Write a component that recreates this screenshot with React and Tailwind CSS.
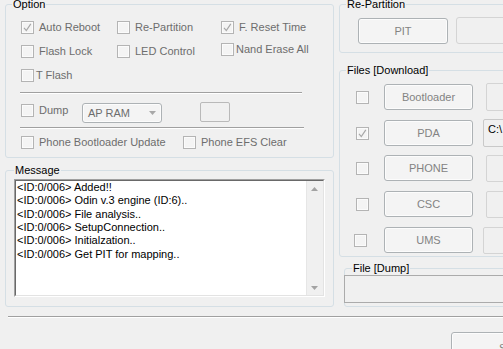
import React from "react";

function Check({ checked }) {
  return (
    <span className="w-[13px] h-[13px] shrink-0 border border-[#b4b4b4] bg-[#f4f4f4] shadow-[inset_0_0_0_1px_#fbfbfb] flex items-center justify-center">
      {checked && (
        <svg width="11" height="11" viewBox="0 0 11 11">
          <path d="M2 5.8 L4.3 8.6 L8.8 1.8" fill="none" stroke="#a8a8a8" strokeWidth="1.2" />
        </svg>
      )}
    </span>
  );
}

function CheckItem({ checked, label, gapClass, className }) {
  return (
    <div className={"flex items-center h-[13px] shrink-0 " + (className || "")}>
      <Check checked={checked} />
      <span className={"text-[#6d6d6d] whitespace-nowrap " + (gapClass || "ml-[5px]")}>{label}</span>
    </div>
  );
}

function Btn({ children, className }) {
  return (
    <div
      className={
        "flex items-center justify-center shrink-0 border border-[#adb2b5] rounded-[3px] bg-[#f4f4f4] text-[#838383] shadow-[inset_0_0_0_1px_#fcfcfc] " +
        (className || "")
      }
    >
      {children}
    </div>
  );
}

function Box({ className, children }) {
  return (
    <div className={"shrink-0 border border-[#c9c9c9] rounded-[2px] bg-[#f0f0f0] " + (className || "")}>{children}</div>
  );
}

const lines = [
  "<ID:0/006> Added!!",
  "<ID:0/006> Odin v.3 engine (ID:6)..",
  "<ID:0/006> File analysis..",
  "<ID:0/006> SetupConnection..",
  "<ID:0/006> Initialzation..",
  "<ID:0/006> Get PIT for mapping..",
];

export default function App() {
  return (
    <div className="w-[503px] h-[349px] overflow-hidden bg-[#f0f0f0] font-['Liberation_Sans',Arial,sans-serif] text-[11px] leading-[13px] text-black flex flex-col">
      <div className="flex h-[307px] shrink-0">
        {/* Left column */}
        <div className="w-[339px] shrink-0 pl-[5px] flex flex-col">
          <fieldset className="-mt-[2px] w-[329px] h-[160px] shrink-0 border border-[#d5dfe5] rounded-[3px] min-w-0">
            <legend className="ml-[6px] px-[1px] leading-[13px]">Option</legend>
            <div className="pl-[15px] pt-[10px] flex flex-col">
              <div className="flex items-start h-[13px]">
                <CheckItem checked label="Auto Reboot" className="w-[96px]" />
                <CheckItem label="Re-Partition" className="w-[104px]" />
                <CheckItem checked label="F. Reset Time" />
              </div>
              <div className="flex items-start h-[13px] mt-[11px]">
                <CheckItem label="Flash Lock" className="w-[96px]" />
                <CheckItem label="LED Control" className="w-[104px]" />
                <CheckItem label="Nand Erase All" gapClass="ml-[2px]" className="-mt-[2px]" />
              </div>
              <div className="flex items-start h-[13px] mt-[11px]">
                <CheckItem label="T Flash" gapClass="ml-[2px]" />
              </div>
              <div className="mt-[10px] -ml-[1px] w-[282px] h-[2px] border-t border-b border-t-[#a0a0a0] border-b-white" />
              <div className="flex items-start h-[21px] mt-[8px]">
                <CheckItem label="Dump" className="w-[61px] mt-[2px]" />
                <div className="mt-[1px] w-[80px] h-[20px] shrink-0 border border-[#adb2b5] rounded-[3px] bg-[#f4f4f4] shadow-[inset_0_0_0_1px_#fcfcfc] flex items-center pl-[5px] pr-[5px] text-[#6d6d6d]">
                  <span className="flex-1">AP RAM</span>
                  <svg width="7" height="4" viewBox="0 0 7 4">
                    <path d="M0 0 H7 L3.5 4 Z" fill="#a8a8a8" />
                  </svg>
                </div>
                <div className="ml-[38px] w-[30px] h-[20px] shrink-0 border border-[#b9b9b9] rounded-[2px] bg-[#f0f0f0]" />
              </div>
              <div className="mt-[4px] -ml-[1px] w-[284px] h-[2px] border-t border-b border-t-[#a0a0a0] border-b-white" />
              <div className="flex items-start h-[13px] mt-[7px]">
                <CheckItem label="Phone Bootloader Update" className="w-[162px]" />
                <CheckItem label="Phone EFS Clear" />
              </div>
            </div>
          </fieldset>

          <fieldset className="mt-[6px] w-[329px] h-[143px] shrink-0 border border-[#d5dfe5] rounded-[3px] min-w-0">
            <legend className="ml-[8px] px-[1px] leading-[13px]">Message</legend>
            <div className="ml-[8px] mt-[2px] w-[311px] h-[118px] border border-t-[#a0a0a0] border-l-[#a0a0a0] border-r-white border-b-white">
              <div className="w-full h-full border border-t-[#696969] border-l-[#696969] border-r-[#e3e3e3] border-b-[#e3e3e3] bg-white flex">
                <div className="flex-1 pl-[1px] leading-[13.33px] whitespace-nowrap overflow-hidden">
                  {lines.map((l, i) => (
                    <div key={i}>{l}</div>
                  ))}
                </div>
                <div className="w-[17px] shrink-0 bg-[#f0f0f0] border-l border-l-[#e6e6e6] flex flex-col justify-between pl-[4px] pt-[6px] pb-[5px]">
                  <svg width="7" height="4" viewBox="0 0 7 4">
                    <path d="M0 4 H7 L3.5 0 Z" fill="#a3a3a3" />
                  </svg>
                  <svg width="7" height="4" viewBox="0 0 7 4">
                    <path d="M0 0 H7 L3.5 4 Z" fill="#a3a3a3" />
                  </svg>
                </div>
              </div>
            </div>
          </fieldset>
        </div>

        {/* Right column */}
        <div className="flex-1 min-w-0 flex flex-col">
          <fieldset className="-mt-[2px] w-[200px] h-[55px] shrink-0 border border-[#d5dfe5] rounded-[3px] min-w-0">
            <legend className="ml-[6px] px-[1px] leading-[13px]">Re-Partition</legend>
            <div className="flex items-start pt-[7px] pl-[18px]">
              <Btn className="w-[90px] h-[26px]">PIT</Btn>
              <Box className="ml-[8px] -mt-[1px] w-[80px] h-[27px] rounded-[3px] border-[#d4d4d4]" />
            </div>
          </fieldset>

          <fieldset className="mt-[11px] w-[200px] h-[193px] shrink-0 border border-[#d5dfe5] rounded-[3px] min-w-0">
            <legend className="ml-[6px] px-[1px] leading-[13px]">Files [Download]</legend>
            <div className="flex flex-col pt-[6px]">
              <div className="flex items-center h-[28px]">
                <div className="ml-[16px]"><Check /></div>
                <Btn className="ml-[15px] w-[89px] h-[26px]">Bootloader</Btn>
                <Box className="ml-[13px] w-[60px] h-[28px] border-[#d4d4d4]" />
              </div>
              <div className="flex items-center h-[28px] mt-[8px]">
                <div className="ml-[16px]"><Check checked /></div>
                <Btn className="ml-[15px] w-[89px] h-[26px]">PDA</Btn>
                <Box className="ml-[10px] self-stretch w-[60px] border-[#bdbdbd] pl-[4px] pt-[3px]">C:\</Box>
              </div>
              <div className="flex items-center h-[28px] mt-[7px]">
                <div className="ml-[16px]"><Check /></div>
                <Btn className="ml-[15px] w-[89px] h-[26px]">PHONE</Btn>
                <Box className="ml-[13px] w-[60px] h-[27px] border-[#d4d4d4]" />
              </div>
              <div className="flex items-center h-[28px] mt-[8px]">
                <div className="ml-[16px]"><Check /></div>
                <Btn className="ml-[15px] w-[89px] h-[26px]">CSC</Btn>
                <Box className="ml-[13px] w-[60px] h-[27px] border-[#d4d4d4]" />
              </div>
              <div className="flex items-center h-[28px] mt-[8px]">
                <div className="ml-[14px]"><Check /></div>
                <Btn className="ml-[17px] w-[89px] h-[26px]">UMS</Btn>
                <Box className="ml-[10px] w-[60px] h-[27px] border-[#d4d4d4]" />
              </div>
            </div>
          </fieldset>

          <fieldset className="mt-[5px] ml-[5px] w-[200px] h-[45px] shrink-0 border border-[#d5dfe5] rounded-[3px] min-w-0">
            <legend className="ml-[7px] px-[1px] leading-[13px]">File [Dump]</legend>
            <div className="-ml-[1px] w-[200px] h-[28px] border border-[#ababab] bg-[#f0f0f0]" />
          </fieldset>
        </div>
      </div>

      <div className="shrink-0 mt-[9px] ml-[8px] h-[2px] border-t border-b border-t-[#a0a0a0] border-b-white" />

      <div className="shrink-0 flex mt-[14px]">
        <Btn className="ml-[451px] w-[119px] h-[32px]">Start</Btn>
      </div>
    </div>
  );
}
